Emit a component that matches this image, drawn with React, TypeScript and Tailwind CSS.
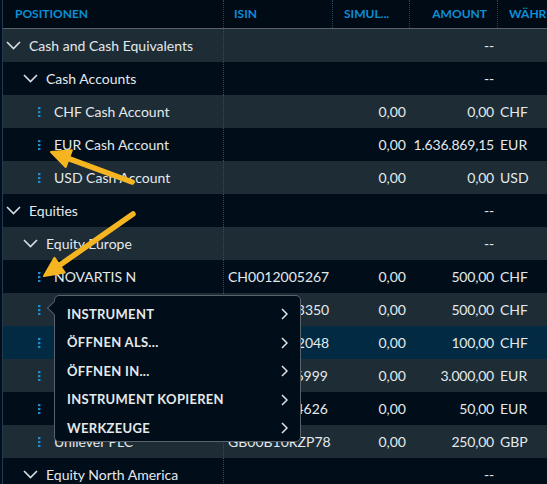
import React from 'react'

type Row = {
  level: number
  kind: 'group' | 'leaf'
  name: string
  isin?: string
  simul?: string
  amount?: string
  cur?: string
  sel?: boolean
}

const rows: Row[] = [
  { level: 0, kind: 'group', name: 'Cash and Cash Equivalents', amount: '--' },
  { level: 1, kind: 'group', name: 'Cash Accounts', amount: '--' },
  { level: 2, kind: 'leaf', name: 'CHF Cash Account', simul: '0,00', amount: '0,00', cur: 'CHF' },
  { level: 2, kind: 'leaf', name: 'EUR Cash Account', simul: '0,00', amount: '1.636.869,15', cur: 'EUR' },
  { level: 2, kind: 'leaf', name: 'USD Cash Account', simul: '0,00', amount: '0,00', cur: 'USD' },
  { level: 0, kind: 'group', name: 'Equities', amount: '--' },
  { level: 1, kind: 'group', name: 'Equity Europe', amount: '--' },
  { level: 2, kind: 'leaf', name: 'NOVARTIS N', isin: 'CH0012005267', simul: '0,00', amount: '500,00', cur: 'CHF' },
  { level: 2, kind: 'leaf', name: 'NESTLE N', isin: 'CH0038863350', simul: '0,00', amount: '500,00', cur: 'CHF' },
  { level: 2, kind: 'leaf', name: 'ROCHE GS', isin: 'CH0012032048', simul: '0,00', amount: '100,00', cur: 'CHF', sel: true },
  { level: 2, kind: 'leaf', name: 'SIEMENS N', isin: 'DE0007236999', simul: '0,00', amount: '3.000,00', cur: 'EUR' },
  { level: 2, kind: 'leaf', name: 'SAP SE', isin: 'DE0007164626', simul: '0,00', amount: '50,00', cur: 'EUR' },
  { level: 2, kind: 'leaf', name: 'Unilever PLC', isin: 'GB00B10RZP78', simul: '0,00', amount: '250,00', cur: 'GBP' },
  { level: 1, kind: 'group', name: 'Equity North America', amount: '--' },
]

const menuItems = ['INSTRUMENT', 'ÖFFNEN ALS...', 'ÖFFNEN IN...', 'INSTRUMENT KOPIEREN', 'WERKZEUGE']

function Chevron() {
  return (
    <svg width="15" height="9" viewBox="0 0 15 9" className="shrink-0">
      <polyline points="1,1 7.5,7.5 14,1" fill="none" stroke="#d9e0e4" strokeWidth="1.6" />
    </svg>
  )
}

function Dots() {
  return (
    <svg width="3" height="10" viewBox="0 0 3 10" className="shrink-0">
      <rect x="0" y="0" width="2.4" height="2.2" fill="#1a8fd2" />
      <rect x="0" y="4" width="2.4" height="2.2" fill="#1a8fd2" />
      <rect x="0" y="8" width="2.4" height="2.2" fill="#1a8fd2" />
    </svg>
  )
}

function TableRow({ row, index }: { row: Row; index: number }) {
  const bg = row.sel ? 'bg-[#022a42]' : index % 2 === 0 ? 'bg-[#1e2c35]' : 'bg-[#010d18]'
  return (
    <div className={`grid grid-cols-[221px_109px_77px_88px_1fr] h-[33px] items-center ${bg}`}>
      <div className="h-full flex items-center border-r border-dotted border-[#34495a]">
        {row.kind === 'group' ? (
          <div className={`flex items-center gap-[8px] ${row.level === 0 ? 'pl-[3px]' : 'pl-[20px]'}`}>
            <Chevron />
            <span>{row.name}</span>
          </div>
        ) : (
          <div className="flex items-center gap-[13px] pl-[35px]">
            <Dots />
            <span>{row.name}</span>
          </div>
        )}
      </div>
      <div className="pl-[4px]">{row.isin}</div>
      <div className="text-right pr-[4px]">{row.simul}</div>
      <div className="text-right pr-[4px] tracking-[-0.2px]">{row.amount}</div>
      <div className="pl-[2px]">{row.cur}</div>
    </div>
  )
}

export default function App() {
  return (
    <div
      className="relative w-[547px] h-[484px] overflow-hidden bg-[#010d18] text-[#e3e9ec] text-[14px] pl-[2px]"
      style={{ fontFamily: 'Lato, "Noto Sans", sans-serif' }}
    >
      <div className="h-full border-l border-[#1f3a52]">
        <div className="grid grid-cols-[221px_109px_77px_88px_1fr] h-[29px] items-center border-b border-[#5b6167] text-[12px] font-bold text-[#0b8fd6] bg-[#000b16]">
          <div className="h-full flex items-center pl-[12px] border-r border-dotted border-[#2c4457]">POSITIONEN</div>
          <div className="h-full flex items-center pl-[10px] border-r border-dotted border-[#2c4457]">ISIN</div>
          <div className="h-full flex items-center pl-[11px] border-r border-dotted border-[#2c4457]">SIMUL...</div>
          <div className="h-full flex items-center justify-end pr-[10px] border-r border-dotted border-[#2c4457]">AMOUNT</div>
          <div className="h-full flex items-center pl-[11px] whitespace-nowrap">WÄHRUNG</div>
        </div>
        {rows.map((r, i) => (
          <TableRow key={i} row={r} index={i} />
        ))}
      </div>

      {/* context menu */}
      <div className="absolute left-[54px] top-[295px] w-[247px] h-[147px] rounded-[5px] border border-[#59636c] bg-[#010d18] pt-[4px] text-[13px] font-bold text-[#e4e9ec] tracking-[0.3px]">
        <div className="absolute left-[-6px] top-[7px] w-[10px] h-[10px] rotate-45 border-l border-b border-[#59636c] bg-[#010d18]" />
        {menuItems.map((m) => (
          <div key={m} className="h-[28.5px] flex items-center justify-between pl-[12px] pr-[12px]">
            <span>{m}</span>
            <svg width="7" height="12" viewBox="0 0 7 12">
              <polyline points="1,1 6,6 1,11" fill="none" stroke="#dfe5e8" strokeWidth="1.5" />
            </svg>
          </div>
        ))}
      </div>

      {/* annotation arrows */}
      <svg className="absolute left-0 top-0 pointer-events-none" width="547" height="484">
        <line x1="132" y1="182" x2="68.8" y2="158.6" stroke="#f5b520" strokeWidth="5.5" strokeLinecap="round" />
        <polygon points="51,152 71.9,150.2 65.7,167" fill="#f5b520" stroke="#f5b520" strokeWidth="2" strokeLinejoin="round" />
        <line x1="133" y1="214" x2="59.6" y2="265.2" stroke="#f5b520" strokeWidth="5.5" strokeLinecap="round" />
        <polygon points="44,276 54.5,257.8 64.7,272.6" fill="#f5b520" stroke="#f5b520" strokeWidth="2" strokeLinejoin="round" />
      </svg>
    </div>
  )
}
